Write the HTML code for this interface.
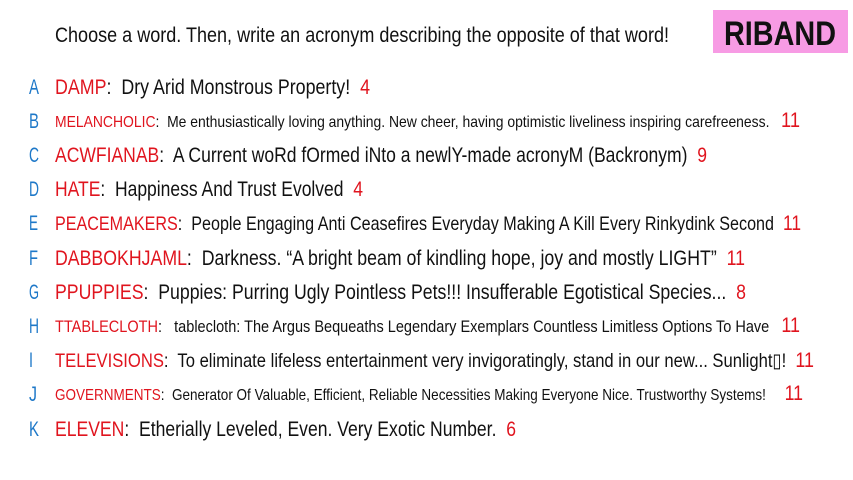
<!DOCTYPE html>
<html><head><meta charset="utf-8"><style>
html,body{margin:0;padding:0;background:#fff;width:853px;height:480px;overflow:hidden}
svg{display:block}
text{font-family:"Liberation Sans Narrow","Liberation Sans",sans-serif;fill:#111;white-space:pre}
.l{fill:#1e78c8}.r{fill:#e0141e}
</style></head><body>
<svg width="853" height="480" viewBox="0 0 853 480" xml:space="preserve">
<rect x="713" y="10" width="135" height="43" fill="#f79be4"/>
<text x="724" y="45" font-size="34" font-weight="bold" textLength="112" lengthAdjust="spacingAndGlyphs" style="fill:#111">RIBAND</text>
<text x="55" y="42" font-size="21" textLength="614" lengthAdjust="spacingAndGlyphs">Choose a word. Then, write an acronym describing the opposite of that word!</text>

<g font-size="21">
<text class="l" x="29" y="94" textLength="10" lengthAdjust="spacingAndGlyphs">A</text>
<text x="55" y="94" textLength="315" lengthAdjust="spacingAndGlyphs"><tspan class="r">DAMP</tspan>:  Dry Arid Monstrous Property!  <tspan class="r">4</tspan></text>
<text class="l" x="29" y="128" textLength="10" lengthAdjust="spacingAndGlyphs">B</text>
<text x="55" y="127" font-size="16" textLength="745" lengthAdjust="spacingAndGlyphs"><tspan class="r">MELANCHOLIC</tspan>:  Me enthusiastically loving anything. New cheer, having optimistic liveliness inspiring carefreeness.   <tspan class="r" font-size="21">11</tspan></text>
<text class="l" x="29" y="162" textLength="10" lengthAdjust="spacingAndGlyphs">C</text>
<text x="55" y="162" textLength="652" lengthAdjust="spacingAndGlyphs"><tspan class="r">ACWFIANAB</tspan>:  A Current woRd fOrmed iNto a newlY-made acronyM (Backronym)  <tspan class="r">9</tspan></text>
<text class="l" x="29" y="196" textLength="10" lengthAdjust="spacingAndGlyphs">D</text>
<text x="55" y="196" textLength="308" lengthAdjust="spacingAndGlyphs"><tspan class="r">HATE</tspan>:  Happiness And Trust Evolved  <tspan class="r">4</tspan></text>
<text class="l" x="29" y="230" textLength="9" lengthAdjust="spacingAndGlyphs">E</text>
<text x="55" y="230" font-size="19.5" textLength="746" lengthAdjust="spacingAndGlyphs"><tspan class="r">PEACEMAKERS</tspan>:  People Engaging Anti Ceasefires Everyday Making A Kill Every Rinkydink Second  <tspan class="r" font-size="21">11</tspan></text>
<text class="l" x="29" y="265" textLength="9" lengthAdjust="spacingAndGlyphs">F</text>
<text x="55" y="265" textLength="690" lengthAdjust="spacingAndGlyphs"><tspan class="r">DABBOKHJAML</tspan>:  Darkness. “A bright beam of kindling hope, joy and mostly LIGHT”  <tspan class="r">11</tspan></text>
<text class="l" x="29" y="299" textLength="10" lengthAdjust="spacingAndGlyphs">G</text>
<text x="55" y="299" textLength="691" lengthAdjust="spacingAndGlyphs"><tspan class="r">PPUPPIES</tspan>:  Puppies: Purring Ugly Pointless Pets!!! Insufferable Egotistical Species...  <tspan class="r">8</tspan></text>
<text class="l" x="29" y="333" textLength="10" lengthAdjust="spacingAndGlyphs">H</text>
<text x="55" y="332" font-size="17" textLength="745" lengthAdjust="spacingAndGlyphs"><tspan class="r">TTABLECLOTH</tspan>:   tablecloth: The Argus Bequeaths Legendary Exemplars Countless Limitless Options To Have   <tspan class="r" font-size="21">11</tspan></text>
<text class="l" x="29" y="367" textLength="4" lengthAdjust="spacingAndGlyphs">I</text>
<text x="55" y="367" font-size="19.5" textLength="759" lengthAdjust="spacingAndGlyphs"><tspan class="r">TELEVISIONS</tspan>:  To eliminate lifeless entertainment very invigoratingly, stand in our new... Sunlight▯!  <tspan class="r" font-size="21">11</tspan></text>
<text class="l" x="29" y="401" textLength="8" lengthAdjust="spacingAndGlyphs">J</text>
<text x="55" y="400" font-size="16" textLength="748" lengthAdjust="spacingAndGlyphs"><tspan class="r">GOVERNMENTS</tspan>:  Generator Of Valuable, Efficient, Reliable Necessities Making Everyone Nice. Trustworthy Systems!     <tspan class="r" font-size="21">11</tspan></text>
<text class="l" x="29" y="436" textLength="10" lengthAdjust="spacingAndGlyphs">K</text>
<text x="55" y="436" textLength="461" lengthAdjust="spacingAndGlyphs"><tspan class="r">ELEVEN</tspan>:  Etherially Leveled, Even. Very Exotic Number.  <tspan class="r">6</tspan></text>
</g>
</svg>
</body></html>
